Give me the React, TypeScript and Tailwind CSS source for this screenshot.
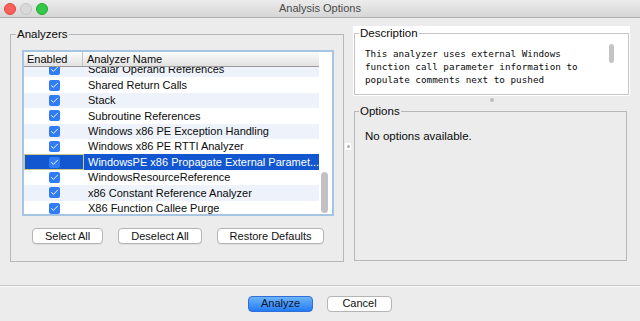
import { Check } from "lucide-react";

const analyzers = [
  "Scalar Operand References",
  "Shared Return Calls",
  "Stack",
  "Subroutine References",
  "Windows x86 PE Exception Handling",
  "Windows x86 PE RTTI Analyzer",
  "WindowsPE x86 Propagate External Paramet...",
  "WindowsResourceReference",
  "x86 Constant Reference Analyzer",
  "X86 Function Callee Purge",
];
const SELECTED = 6;

function Light({ color }: { color: string }) {
  return <span className={`h-[12px] w-[12px] rounded-full border ${color}`} />;
}

function Box() {
  return (
    <span className="grid h-[11px] w-[11px] place-items-center rounded-[2px] bg-[#2f7cf6]">
      <Check className="h-[9px] w-[9px] text-white" strokeWidth={2.5} />
    </span>
  );
}

function PanelButton({ label, width }: { label: string; width: string }) {
  return (
    <button
      type="button"
      className={`${width} h-[16px] rounded-[4px] border border-[#b4b4b4] bg-white text-[11px] leading-none text-[#111] shadow-[0_1px_0_rgba(0,0,0,0.06)]`}
    >
      {label}
    </button>
  );
}

export default function App() {
  return (
    <div className="flex h-[321px] w-[640px] flex-col overflow-hidden bg-[#ececec] font-['Liberation_Sans',Arial,sans-serif] text-[#0a0a0a]">
      {/* title bar */}
      <div className="relative flex h-[18px] items-center border-b border-[#b1b1b1] bg-gradient-to-b from-[#ececec] to-[#d6d6d6]">
        <div className="absolute left-[4px] top-[3px] flex gap-[4px]">
          <Light color="border-[#e0443e] bg-[#fc605c]" />
          <Light color="border-[#c6c6c6] bg-[#d9d9d9]" />
          <Light color="border-[#1aab29] bg-[#34c84a]" />
        </div>
        <div className="flex-1 text-center text-[11px] text-[#4a4a4a]">Analysis Options</div>
      </div>

      {/* body */}
      <div className="flex h-[267px] pt-[9px]">
        <div className="ml-[10px] w-[333px]">
          <fieldset className="h-[235px] border border-[#b8b8b8] pl-[11px] pr-[9px]">
            <legend className="ml-[-6px] px-[1px] text-[11.5px] leading-[15px]">Analyzers</legend>
            <div className="mt-[8px] flex h-[166px] border-2 border-[#a6c4e4] bg-white">
              <div className="flex min-w-0 flex-1 flex-col">
                <div className="flex h-[15px] shrink-0 border-b border-[#9a9a9a] bg-gradient-to-b from-[#fbfbfb] to-[#e2e2e2] text-[11px] leading-[15px]">
                  <div className="w-[59px] border-r border-[#c4c4c4] pl-[3px]">Enabled</div>
                  <div className="pl-[4px]">Analyzer Name</div>
                </div>
                <div className="flex-1 overflow-hidden">
                  <div className="-mt-[5px]">
                    {analyzers.map((name, i) => {
                      const sel = i === SELECTED;
                      const bg = sel ? "bg-[#1257d0] text-white" : i % 2 === 0 ? "bg-[#eef3fb]" : "bg-white";
                      return (
                        <div key={name} className={`flex h-[15.4px] items-center text-[11px] ${bg}`}>
                          <div
                            className={`flex h-full w-[60px] items-center justify-center ${
                              sel ? "border border-[#c9c98a]" : ""
                            }`}
                          >
                            <Box />
                          </div>
                          <div className="whitespace-nowrap pl-[4px]">{name}</div>
                        </div>
                      );
                    })}
                  </div>
                </div>
              </div>
              <div className="flex w-[13px] flex-col justify-end bg-white pb-[1px] pl-[2px]">
                <div className="h-[41px] w-[7px] rounded-full bg-[#c2c2c2]" />
              </div>
            </div>
            <div className="mt-[12px] flex justify-center gap-[15px]">
              <PanelButton label="Select All" width="w-[71px]" />
              <PanelButton label="Deselect All" width="w-[84px]" />
              <PanelButton label="Restore Defaults" width="w-[107px]" />
            </div>
          </fieldset>
        </div>

        {/* splitter */}
        <div className="flex w-[10px] items-center justify-center pb-[20px]">
          <div className="grid h-[7px] w-[6px] place-items-center bg-white">
            <span className="h-[3px] w-[3px] rounded-full bg-[#b0b0b0]" />
          </div>
        </div>

        <div className="-mt-[1px] flex w-[277px] flex-col">
          <div className="h-[70px] bg-white px-[1px]">
            <fieldset className="h-[69px] border border-[#c4c4c4] pl-[10px] pr-[14px]">
              <legend className="ml-[-6px] px-[1px] text-[11.5px] leading-[15px]">Description</legend>
              <div className="flex">
                <div className="flex-1 whitespace-pre pt-[6px] font-['DejaVu_Sans_Mono','Liberation_Mono',monospace] text-[9.3px] leading-[13px]">
                  {"This analyzer uses external Windows\nfunction call parameter information to\npopulate comments next to pushed"}
                </div>
                <div className="mt-[3px] h-[19px] w-[5px] rounded-full bg-[#c4c4c4]" />
              </div>
            </fieldset>
          </div>
          <div className="flex h-[8px] items-center justify-center">
            <span className="h-[4px] w-[4px] rounded-full bg-[#bdbdbd]" />
          </div>
          <div className="pl-[1px] pr-[3px]">
            <fieldset className="h-[157px] border border-[#b8b8b8] pl-[10px]">
              <legend className="ml-[-6px] px-[1px] text-[11.5px] leading-[15px]">Options</legend>
              <div className="pt-[9px] text-[11.5px]">No options available.</div>
            </fieldset>
          </div>
        </div>
      </div>

      {/* footer */}
      <div className="flex flex-1 items-center justify-center gap-[14px] border-t border-[#c6c6c6] shadow-[inset_0_1px_0_#fafafa]">
        <button
          type="button"
          className="h-[16px] w-[65px] rounded-[4px] border border-[#2f6fd6] bg-gradient-to-b from-[#6cb3fa] to-[#1f7bf2] text-[11px] leading-none text-[#0b1630]"
        >
          Analyze
        </button>
        <button
          type="button"
          className="h-[16px] w-[65px] rounded-[4px] border border-[#b4b4b4] bg-white text-[11px] leading-none text-[#111]"
        >
          Cancel
        </button>
      </div>
    </div>
  );
}
